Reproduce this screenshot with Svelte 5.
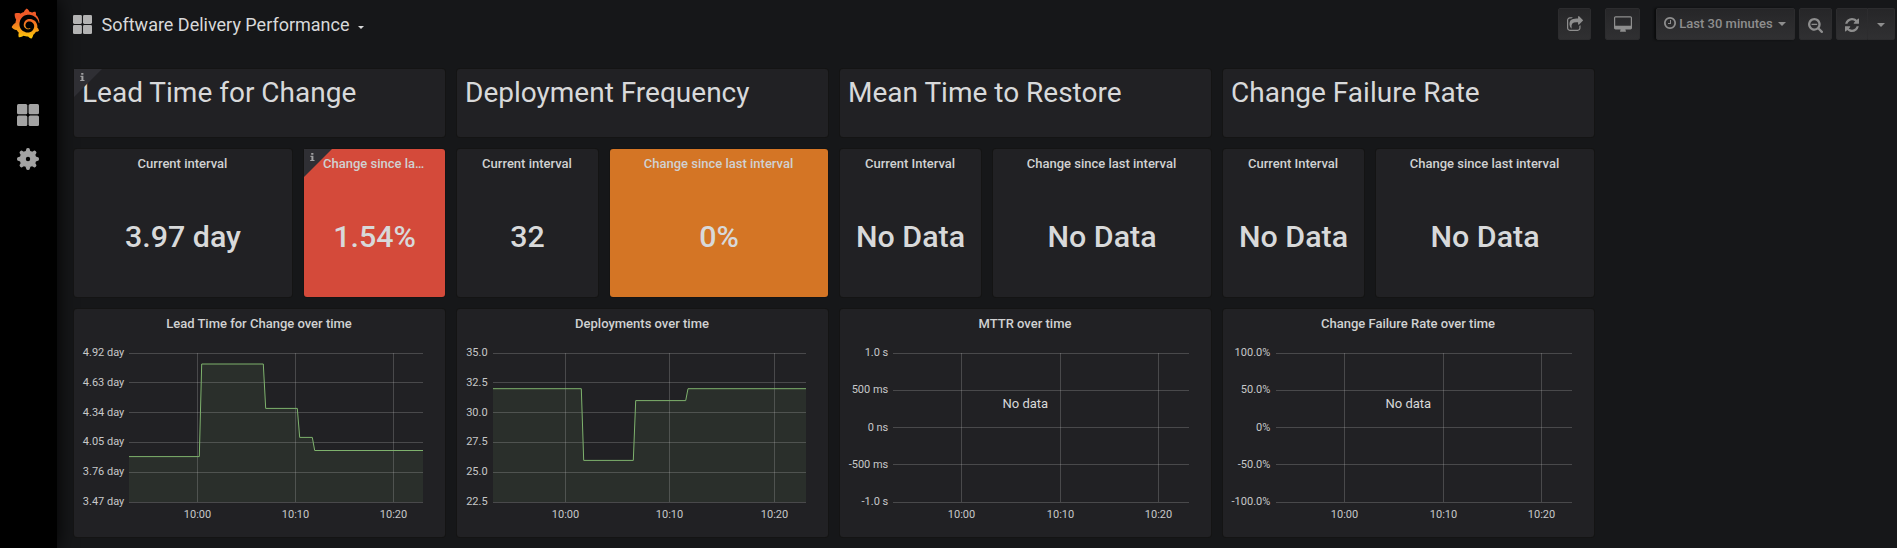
<script>
  const headings = [
    { text: 'Lead Time for Change', info: true },
    { text: 'Deployment Frequency' },
    { text: 'Mean Time to Restore' },
    { text: 'Change Failure Rate' }
  ];

  const stats = [
    { title: 'Current interval', value: '3.97 day', wide: true },
    { title: 'Change since last interval', value: '1.54%', tone: 'red', info: true },
    { title: 'Current interval', value: '32' },
    { title: 'Change since last interval', value: '0%', tone: 'orange', wide: true },
    { title: 'Current Interval', value: 'No Data' },
    { title: 'Change since last interval', value: 'No Data', wide: true },
    { title: 'Current Interval', value: 'No Data' },
    { title: 'Change since last interval', value: 'No Data', wide: true }
  ];

  const sixRows = [[44, 47], [73, 77], [103, 107], [133, 136], [163, 166], [193, 196]];
  const fiveRows = [[44, 47], [81, 84], [118, 122], [155, 159], [193, 196]];
  const times = ['10:00', '10:10', '10:20'];

  const charts = [
    {
      title: 'Lead Time for Change over time',
      left: 55, labelEnd: 50.3, rows: sixRows, cols: [123, 221, 319],
      labels: ['4.92 day', '4.63 day', '4.34 day', '4.05 day', '3.76 day', '3.47 day'],
      line: '55,147.6 125.3,147.6 127.7,55 189.3,55 191.7,99.4 223.3,99.4 225.7,128.4 238.3,128.4 240.7,141.5 349,141.5'
    },
    {
      title: 'Deployments over time',
      left: 36, labelEnd: 30.6, rows: sixRows, cols: [108, 212, 317],
      labels: ['35.0', '32.5', '30.0', '27.5', '25.0', '22.5'],
      line: '36,79.7 124.3,79.7 126.7,151.4 176.3,151.4 178.7,91.6 228.7,91.6 231,79.7 349,79.7'
    },
    {
      title: 'MTTR over time',
      left: 53, labelEnd: 48.3, rows: fiveRows, cols: [121, 220, 318],
      labels: ['1.0 s', '500 ms', '0 ns', '-500 ms', '-1.0 s']
    },
    {
      title: 'Change Failure Rate over time',
      left: 53, labelEnd: 47.3, rows: fiveRows, cols: [121, 220, 318],
      labels: ['100.0%', '50.0%', '0%', '-50.0%', '-100.0%']
    }
  ];
</script>

{#snippet corner()}
  <span class="corner">
    <svg viewBox="0 0 5 8" width="5" height="8"><path d="M1.2 0h2.2v1.7H1.2zM.4 2.8h3v4.1h1.1V8H.2V6.9h1.2V3.9h-1z" /></svg>
  </span>
{/snippet}

{#snippet tiles(size)}
  <svg class="tiles" viewBox="0 0 22 22" width={size} height={size}>
    <rect width="10.3" height="10.3" rx="1.5" /><rect x="11.6" width="10.4" height="10.3" rx="1.5" />
    <rect y="11.6" width="10.3" height="10.4" rx="1.5" /><rect x="11.6" y="11.6" width="10.4" height="10.4" rx="1.5" />
  </svg>
{/snippet}

<div class="app">
  <nav class="sidebar">
    <svg class="logo" viewBox="0 0 351 365" width="29" height="31">
      <defs>
        <linearGradient id="flame" gradientUnits="userSpaceOnUse" x1="175" y1="445" x2="175" y2="115">
          <stop offset="0" stop-color="#fff100" /><stop offset="1" stop-color="#f05a28" />
        </linearGradient>
      </defs>
      <path fill="url(#flame)" d="M342,161.2c-0.6-6.1-1.6-13.1-3.6-20.9c-2-7.7-5-16.2-9.4-25c-4.4-8.8-10.1-17.9-17.5-26.8c-2.9-3.5-6.1-6.9-9.5-10.2c5.1-20.3-6.2-37.9-6.2-37.9c-19.5-1.2-31.9,6.1-36.5,9.4c-0.8-0.3-1.5-0.7-2.3-1c-3.3-1.3-6.7-2.6-10.3-3.7c-3.5-1.1-7.1-2.1-10.8-3c-3.7-0.9-7.4-1.6-11.2-2.2c-0.7-0.1-1.3-0.2-2-0.3c-8.5-27.2-32.9-38.6-32.9-38.6c-27.3,17.3-32.4,41.5-32.4,41.5s-0.1,0.5-0.3,1.4c-1.5,0.4-3,0.9-4.5,1.3c-2.1,0.6-4.2,1.4-6.2,2.2c-2.1,0.8-4.1,1.6-6.2,2.5c-4.1,1.8-8.2,3.8-12.2,6c-3.9,2.2-7.7,4.6-11.4,7.1c-0.5-0.2-1-0.4-1-0.4c-37.8-14.4-71.3,2.9-71.3,2.9c-3.1,40.2,15.1,65.5,18.7,70.1c-0.9,2.5-1.7,5-2.5,7.5c-2.8,9.1-4.9,18.4-6.2,28.1c-0.2,1.4-0.4,2.8-0.5,4.2C18.8,192.7,8.5,228,8.5,228c29.1,33.5,63.1,35.6,63.1,35.6c0,0,0.1-0.1,0.1-0.1c4.3,7.7,9.3,15,14.9,21.9c2.4,2.9,4.8,5.6,7.4,8.3c-10.6,30.4,1.5,55.6,1.5,55.6c32.4,1.2,53.7-14.2,58.2-17.7c3.2,1.1,6.5,2.1,9.8,2.9c10,2.6,20.2,4.1,30.4,4.5c2.5,0.1,5.1,0.2,7.6,0.1l1.2,0l0.8,0l1.6,0l1.6-0.1l0,0.1c15.3,21.8,42.1,24.9,42.1,24.9c19.1-20.1,20.2-40.1,20.2-44.4l0,0c0,0,0-0.1,0-0.3c0-0.4,0-0.6,0-0.6l0,0c0-0.3,0-0.6,0-0.9c4-2.8,7.8-5.8,11.4-9.1c7.6-6.9,14.3-14.8,19.9-23.3c0.5-0.8,1-1.6,1.5-2.4c21.6,1.2,36.9-13.4,36.9-13.4c-3.6-22.5-16.4-33.5-19.1-35.6l0,0c0,0-0.1-0.1-0.3-0.2c-0.2-0.1-0.2-0.2-0.2-0.2c0,0,0,0,0,0c-0.1-0.1-0.3-0.2-0.5-0.3c0.1-1.4,0.2-2.7,0.3-4.1c0.2-2.4,0.2-4.9,0.2-7.3l0-1.8l0-0.9l0-0.5c0-0.6,0-0.4,0-0.6l-0.1-1.5l-0.1-2c0-0.7-0.1-1.3-0.2-1.9c-0.1-0.6-0.1-1.3-0.2-1.9l-0.2-1.9l-0.3-1.9c-0.4-2.5-0.8-4.9-1.4-7.4c-2.3-9.7-6.1-18.9-11-27.2c-5-8.3-11.2-15.6-18.3-21.8c-7-6.2-14.9-11.2-23.1-14.9c-8.3-3.7-16.9-6.1-25.5-7.2c-4.3-0.6-8.6-0.8-12.9-0.7l-1.6,0l-0.4,0c-0.1,0-0.6,0-0.5,0l-0.7,0l-1.6,0.1c-0.6,0-1.2,0.1-1.7,0.1c-2.2,0.2-4.4,0.5-6.5,0.9c-8.6,1.6-16.7,4.7-23.8,9c-7.1,4.3-13.3,9.6-18.3,15.6c-5,6-8.9,12.7-11.6,19.6c-2.7,6.9-4.2,14.1-4.6,21c-0.1,1.7-0.1,3.5-0.1,5.2c0,0.4,0,0.9,0,1.3l0.1,1.4c0.1,0.8,0.1,1.7,0.2,2.5c0.3,3.5,1,6.9,1.9,10.1c1.9,6.5,4.9,12.4,8.6,17.4c3.7,5,8.2,9.1,12.9,12.4c4.7,3.2,9.8,5.5,14.8,7c5,1.5,10,2.1,14.7,2.1c0.6,0,1.2,0,1.7,0c0.3,0,0.6,0,0.9,0c0.3,0,0.6,0,0.9-0.1c0.5,0,1-0.1,1.5-0.1c0.1,0,0.3,0,0.4-0.1l0.5-0.1c0.3,0,0.6-0.1,0.9-0.1c0.6-0.1,1.1-0.2,1.7-0.3c0.6-0.1,1.1-0.2,1.6-0.4c1.1-0.2,2.1-0.6,3.1-0.9c2-0.7,4-1.5,5.7-2.4c1.8-0.9,3.4-2,5-3c0.4-0.3,0.9-0.6,1.3-1c1.6-1.3,1.9-3.7,0.6-5.3c-1.1-1.4-3.1-1.8-4.7-0.9c-0.4,0.2-0.8,0.4-1.2,0.6c-1.4,0.7-2.8,1.3-4.3,1.8c-1.5,0.5-3.1,0.9-4.7,1.2c-0.8,0.1-1.6,0.2-2.5,0.3c-0.4,0-0.8,0.1-1.3,0.1c-0.4,0-0.9,0-1.2,0c-0.4,0-0.8,0-1.2,0c-0.5,0-1,0-1.5-0.1c0,0-0.3,0-0.1,0l-0.2,0l-0.3,0c-0.2,0-0.5,0-0.7-0.1c-0.5-0.1-0.9-0.1-1.4-0.2c-3.7-0.5-7.4-1.6-10.9-3.2c-3.6-1.6-7-3.8-10.1-6.6c-3.1-2.8-5.8-6.1-7.9-9.9c-2.1-3.8-3.6-8-4.3-12.4c-0.3-2.2-0.5-4.5-0.4-6.7c0-0.6,0.1-1.2,0.1-1.8c0,0.2,0-0.1,0-0.1l0-0.2l0-0.5c0-0.3,0.1-0.6,0.1-0.9c0.1-1.2,0.3-2.4,0.5-3.6c1.7-9.6,6.5-19,13.9-26.1c1.9-1.8,3.9-3.4,6-4.9c2.1-1.5,4.4-2.8,6.8-3.9c2.4-1.1,4.8-2,7.4-2.7c2.5-0.7,5.1-1.1,7.8-1.4c1.3-0.1,2.6-0.2,4-0.2c0.4,0,0.6,0,0.9,0l1.1,0l0.7,0c0.3,0,0,0,0.1,0l0.3,0l1.1,0.1c2.9,0.2,5.7,0.6,8.5,1.3c5.6,1.2,11.1,3.3,16.2,6.1c10.2,5.7,18.9,14.5,24.2,25.1c2.7,5.3,4.6,11,5.5,16.9c0.2,1.5,0.4,3,0.5,4.5l0.1,1.1l0.1,1.1c0,0.4,0,0.8,0,1.1c0,0.4,0,0.8,0,1.1l0,1l0,1.1c0,0.7-0.1,1.9-0.1,2.6c-0.1,1.6-0.3,3.3-0.5,4.9c-0.2,1.6-0.5,3.2-0.8,4.8c-0.3,1.6-0.7,3.2-1.1,4.7c-0.8,3.1-1.8,6.2-3,9.3c-2.4,6-5.6,11.8-9.4,17.1c-7.7,10.6-18.2,19.2-30.2,24.7c-6,2.7-12.3,4.7-18.8,5.7c-3.2,0.6-6.5,0.9-9.8,1l-0.6,0l-0.5,0l-1.1,0l-1.6,0l-0.8,0c0.4,0-0.1,0-0.1,0l-0.3,0c-1.8,0-3.5-0.1-5.3-0.3c-7-0.5-13.9-1.8-20.7-3.7c-6.7-1.9-13.2-4.6-19.4-7.8c-12.3-6.6-23.4-15.6-32-26.5c-4.3-5.4-8.1-11.3-11.2-17.4c-3.1-6.1-5.6-12.6-7.4-19.1c-1.8-6.6-2.9-13.3-3.4-20.1l-0.1-1.3l0-0.3l0-0.3l0-0.6l0-1.1l0-0.3l0-0.4l0-0.8l0-1.6l0-0.3c0,0,0,0.1,0-0.1l0-0.6c0-0.8,0-1.7,0-2.5c0.1-3.3,0.4-6.8,0.8-10.2c0.4-3.4,1-6.9,1.7-10.3c0.7-3.4,1.5-6.8,2.5-10.2c1.9-6.7,4.3-13.2,7.1-19.3c5.7-12.2,13.1-23.1,22-31.8c2.2-2.2,4.5-4.2,6.9-6.2c2.4-1.9,4.9-3.7,7.5-5.4c2.5-1.7,5.2-3.2,7.9-4.6c1.3-0.7,2.7-1.4,4.1-2c0.7-0.3,1.4-0.6,2.1-0.9c0.7-0.3,1.4-0.6,2.1-0.9c2.8-1.2,5.7-2.2,8.7-3.1c0.7-0.2,1.5-0.4,2.2-0.7c0.7-0.2,1.5-0.4,2.2-0.6c1.5-0.4,3-0.8,4.5-1.1c0.7-0.2,1.5-0.3,2.3-0.5c0.8-0.2,1.5-0.3,2.3-0.5c0.8-0.1,1.5-0.3,2.3-0.4l1.1-0.2l1.2-0.2c0.8-0.1,1.5-0.2,2.3-0.3c0.9-0.1,1.7-0.2,2.6-0.3c0.7-0.1,1.9-0.2,2.6-0.3c0.5-0.1,1.1-0.1,1.6-0.2l1.1-0.1l0.5-0.1l0.6,0c0.9-0.1,1.7-0.1,2.6-0.2l1.3-0.1c0,0,0.5,0,0.1,0l0.3,0l0.6,0c0.7,0,1.5-0.1,2.2-0.1c2.9-0.1,5.9-0.1,8.8,0c5.8,0.2,11.5,0.9,17,1.9c11.1,2.1,21.5,5.6,31,10.3c9.5,4.6,17.9,10.3,25.3,16.5c0.5,0.4,0.9,0.8,1.4,1.2c0.4,0.4,0.9,0.8,1.3,1.2c0.9,0.8,1.7,1.6,2.6,2.4c0.9,0.8,1.7,1.6,2.5,2.4c0.8,0.8,1.6,1.6,2.4,2.5c3.1,3.3,6,6.6,8.6,10c5.2,6.7,9.4,13.5,12.7,19.9c0.2,0.4,0.4,0.8,0.6,1.2c0.2,0.4,0.4,0.8,0.6,1.2c0.4,0.8,0.8,1.6,1.1,2.4c0.4,0.8,0.7,1.5,1.1,2.3c0.3,0.8,0.7,1.5,1,2.3c1.2,3,2.4,5.9,3.3,8.6c1.5,4.4,2.6,8.3,3.5,11.7c0.3,1.4,1.6,2.3,3,2.1c1.5-0.1,2.6-1.3,2.6-2.8C342.6,170.4,342.5,166.1,342,161.2z" />
    </svg>
    {@render tiles(22)}
    <svg class="gear" viewBox="-11 -11 22 22" width="22" height="22">
      <defs>
        <mask id="hub"><rect x="-11" y="-11" width="22" height="22" fill="#fff" /><circle r="2.2" fill="#000" /></mask>
      </defs>
      <g mask="url(#hub)">
        <circle r="8.3" />
        {#each [0, 45, 90, 135, 180, 225, 270, 315] as angle}
          <path transform="rotate({angle})" d="M-3-7.4Q-1.9-8-1.7-10Q-1.6-11 0-11T1.7-10Q1.9-8 3-7.4z" />
        {/each}
      </g>
    </svg>
  </nav>

  <main>
    <header>
      <div class="title">
        {@render tiles(19)}
        <span class="name">Software Delivery Performance</span>
        <svg class="caret" viewBox="0 0 6 3" width="6" height="3"><path d="M0 0h6L3 3z" /></svg>
      </div>
      <div class="actions">
        <button class="btn share" aria-label="Share">
          <svg viewBox="0 0 1664 1536" width="16" height="15"><path d="M1408 989v259q0 119-84.5 203.5t-203.5 84.5h-832q-119 0-203.5-84.5t-84.5-203.5v-832q0-119 84.5-203.5t203.5-84.5h255q13 0 22.5 9.5t9.5 22.5q0 27-26 32-77 26-133 60-10 4-16 4h-112q-66 0-113 47t-47 113v832q0 66 47 113t113 47h832q66 0 113-47t47-113v-214q0-19 18-29 28-13 54-37 16-16 35-8 21 9 21 31zm237-496l-384 384q-18 19-45 19-12 0-25-5-39-17-39-59v-192h-160q-323 0-438 131-119 137-74 473 3 23-20 34-8 2-12 2-16 0-26-13-10-14-21-31t-39.5-68.5-49.5-99.5-38.5-114-17.5-122q0-49 3.5-91t14-90 28-88 47-81.5 68.5-74 94.5-61.5 124.5-48.5 159.5-30.5 196.5-11h160v-192q0-42 39-59 13-5 25-5 26 0 45 19l384 384q19 19 19 45t-19 45z" /></svg>
        </button>
        <button class="btn screen" aria-label="Cycle view mode">
          <svg viewBox="0 0 1920 1664" width="18" height="16"><path d="M1792 992v-832q0-13-9.5-22.5t-22.5-9.5h-1600q-13 0-22.5 9.5t-9.5 22.5v832q0 13 9.5 22.5t22.5 9.5h1600q13 0 22.5-9.5t9.5-22.5zm128-832v1088q0 66-47 113t-113 47h-544q0 37 16 77.5t32 71 16 43.5q0 26-19 45t-45 19h-512q-26 0-45-19t-19-45q0-14 16-44t32-70 16-78h-544q-66 0-113-47t-47-113v-1088q0-66 47-113t113-47h1600q66 0 113 47t47 113z" /></svg>
        </button>
        <button class="btn range">
          <svg viewBox="0 128 1536 1536" width="12" height="12"><path d="M896 544v448q0 14-9 23t-23 9h-320q-14 0-23-9t-9-23v-64q0-14 9-23t23-9h224v-352q0-14 9-23t23-9h64q14 0 23 9t9 23zm416 352q0-148-73-273t-198-198-273-73-273 73-198 198-73 273 73 273 198 198 273 73 273-73 198-198 73-273zm224 0q0 209-103 385.5t-279.5 279.5-385.5 103-385.5-103-279.5-279.5-103-385.5 103-385.5 279.5-279.5 385.5-103 385.5 103 279.5 279.5 103 385.5z" /></svg>
          <span>Last 30 minutes</span>
          <svg class="down" viewBox="0 0 8 4" width="8" height="4"><path d="M0 0h8L4 4z" /></svg>
        </button>
        <button class="btn zoom" aria-label="Zoom out">
          <svg viewBox="0 64 1664 1664" width="15" height="15"><path d="M1024 736v64q0 13-9.5 22.5t-22.5 9.5h-576q-13 0-22.5-9.5t-9.5-22.5v-64q0-13 9.5-22.5t22.5-9.5h576q13 0 22.5 9.5t9.5 22.5zm128 32q0-185-131.5-316.5t-316.5-131.5-316.5 131.5-131.5 316.5 131.5 316.5 316.5 131.5 316.5-131.5 131.5-316.5zm512 832q0 53-37.5 90.5t-90.5 37.5q-54 0-90-38l-343-342q-179 124-399 124-143 0-273.5-55.5t-225-150-150-225-55.5-273.5 55.5-273.5 150-225 225-150 273.5-55.5 273.5 55.5 225 150 150 225 55.5 273.5q0 220-124 399l343 343q37 37 37 90z" /></svg>
        </button>
        <button class="btn refresh" aria-label="Refresh">
          <svg viewBox="0 0 1536 1536" width="14" height="14"><path d="M1511 928q0 5-1 7-64 268-268 434.5t-478 166.5q-146 0-282.5-55t-243.5-157l-129 129q-19 19-45 19t-45-19-19-45v-448q0-26 19-45t45-19h448q26 0 45 19t19 45-19 45l-137 137q71 66 161 102t187 36q134 0 250-65t186-179q11-17 53-117 8-23 30-23h192q13 0 22.5 9.5t9.5 22.5zm25-800v448q0 26-19 45t-45 19h-448q-26 0-45-19t-19-45 19-45l138-138q-148-137-349-137-134 0-250 65t-186 179q-11 17-53 117-8 23-30 23h-199q-13 0-22.5-9.5t-9.5-22.5v-7q65-268 270-434.5t480-166.5q146 0 284 55.5t245 156.5l130-129q19-19 45-19t45 19 19 45z" /></svg>
        </button>
        <button class="btn interval" aria-label="Refresh interval">
          <svg viewBox="0 0 8 4" width="8" height="4"><path d="M0 0h8L4 4z" /></svg>
        </button>
      </div>
    </header>

    <div class="board">
      <div class="row headings">
        {#each headings as item}
          <section class="panel">
            {#if item.info}{@render corner()}{/if}
            <h1>{item.text}</h1>
          </section>
        {/each}
      </div>
      <div class="row stats">
        {#each stats as stat}
          <section class="panel {stat.tone ?? ''}" class:wide={stat.wide}>
            {#if stat.info}{@render corner()}{/if}
            <h2 class:cut={stat.info}>{stat.title}</h2>
            <div class="value">{stat.value}</div>
          </section>
        {/each}
      </div>
      <div class="row charts">
        {#each charts as chart}
          <section class="panel">
            <h2>{chart.title}</h2>
            <svg class="plot" viewBox="0 29 371 199" width="371" height="199">
              {#if chart.line}
                <polygon class="area" points="{chart.left},193 {chart.line} 349,193" />
              {/if}
              {#each chart.rows as [y, baseline], i}
                <rect class="grid" x={chart.left} {y} width={349 - chart.left} height="1" />
                <text x={chart.labelEnd} y={baseline} text-anchor="end">{chart.labels[i]}</text>
              {/each}
              {#each chart.cols as x, i}
                <rect class="grid" {x} y="44" width="1" height="149" />
                <text x={x + 0.5} y="209" text-anchor="middle">{times[i]}</text>
              {/each}
              {#if chart.line}
                <polyline class="line" points={chart.line} />
              {:else}
                <text class="empty" x="185.3" y="99" text-anchor="middle">No data</text>
              {/if}
            </svg>
          </section>
        {/each}
      </div>
    </div>
  </main>
</div>

<style>
  :global(body) { margin: 0; background: #161719; }
  .app {
    display: flex;
    height: 548px;
    overflow: hidden;
    background: #161719;
    color: #d8d9da;
    font-family: Roboto, "Liberation Sans", sans-serif;
  }
  svg { display: block; flex: none; }
  .sidebar {
    box-sizing: border-box;
    width: 57px;
    flex: none;
    padding: 8px 0 0 11px;
    background: #000;
    box-shadow: 0 0 20px #000;
  }
  .sidebar .tiles { margin: 65px 0 0 6px; fill: #a3a3a3; }
  .gear { margin: 22px 0 0 6px; fill: #a3a3a3; }
  main { flex: 1; min-width: 0; }
  header {
    display: flex;
    justify-content: space-between;
    height: 69px;
    padding: 0 2px 0 16px;
  }
  .title { display: flex; align-items: center; height: 49px; }
  .title .tiles { fill: #b3b3b3; }
  .name { margin: 1px 0 0 9.5px; font-size: 18px; line-height: 20px; white-space: nowrap; }
  .caret { margin: 5px 0 0 8.5px; fill: #d8d9da; }
  .actions { display: flex; padding-top: 8px; }
  .btn {
    display: flex;
    align-items: center;
    justify-content: center;
    box-sizing: border-box;
    height: 32px;
    margin: 0;
    padding: 0;
    border: 1px solid #2c2c2e;
    border-radius: 2px;
    background: linear-gradient(#262628, #303032);
    color: #8e8e8e;
    font: 500 13px Roboto, "Liberation Sans", sans-serif;
    white-space: nowrap;
  }
  .btn svg { fill: #8e8e8e; }
  .share { width: 33px; margin-right: 14px; }
  .share svg { margin-top: -2px; }
  .screen { width: 35px; margin-right: 16px; }
  .range { width: 139px; margin-right: 4px; box-shadow: -2px 0 2px #0b0c0d; }
  .range span { margin: -1px 5px 0 3px; }
  .range > svg:first-child { margin-top: -2px; }
  .range .down { margin: -1px 1px 0 0; }
  .zoom { width: 33px; margin-right: 4px; }
  .zoom svg { margin-top: 2px; }
  .refresh { width: 32px; border-radius: 2px 0 0 2px; }
  .refresh svg { margin-top: 1px; }
  .interval { width: 27px; border-left: 0; border-radius: 0 2px 2px 0; }
  .interval svg { margin-top: 2px; }

  .board { display: flex; flex-direction: column; gap: 12px; width: 1520px; padding-left: 17px; }
  .row { display: flex; gap: 12px; }
  .panel {
    position: relative;
    box-sizing: border-box;
    width: 371px;
    border-radius: 3px;
    background: #212124;
    box-shadow: 0 0 0 1px #141414;
  }
  .headings .panel { height: 68px; padding: 4px 8px; }
  h1 { margin: 0; font-size: 28px; font-weight: 400; line-height: 40px; white-space: nowrap; }
  .stats .panel { width: 141px; height: 148px; }
  .stats .wide { width: 218px; }
  .charts .panel { height: 228px; }
  .red { background: #d44a3a; }
  .orange { background: #d47525; }
  h2 {
    margin: 0;
    padding: 2px 1px 0 0;
    height: 27px;
    color: #d0d1d2;
    font-size: 13px;
    font-weight: 500;
    line-height: 26px;
    text-align: center;
    white-space: nowrap;
  }
  .cut { margin: 0 17px 0 19px; overflow: hidden; text-overflow: ellipsis; }
  .value { padding-top: 39px; font-size: 30.4px; font-weight: 500; line-height: 40px; text-align: center; white-space: nowrap; }
  .corner {
    position: absolute;
    top: 0;
    left: 0;
    width: 28px;
    height: 28px;
    background: #2f2f34;
    clip-path: polygon(0 0, 100% 0, 0 100%);
  }
  .corner svg { margin: 4px 0 0 5.5px; fill: #a0a0a2; }
  text { fill: #c7c8c9; font-size: 11px; }
  .empty { fill: #d8d9da; font-size: 13px; }
  .grid { fill: #c8c8c8; fill-opacity: 0.24; }
  .area { fill: #7eb26d; fill-opacity: 0.1; }
  .line { fill: none; stroke: #7eb26d; stroke-width: 1; }
</style>
